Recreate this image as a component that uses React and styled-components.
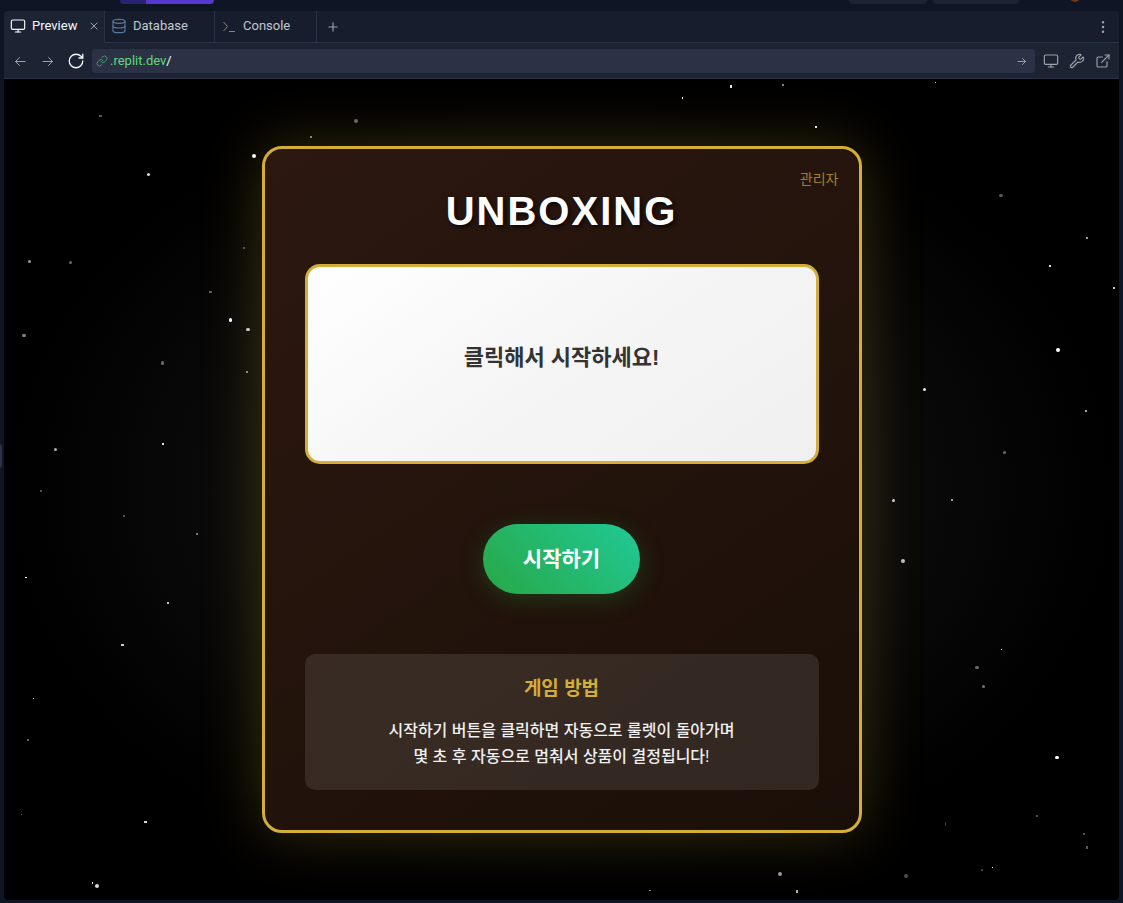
import React, { useState } from "react";
import styled, { createGlobalStyle } from "styled-components";
import {
  Database,
  EllipsisVertical,
  ExternalLink,
  Link,
  Monitor,
  Plus,
  RotateCw,
  Wrench,
  X,
} from "lucide-react";

const GlobalStyle = createGlobalStyle`
  * {
    box-sizing: border-box;
  }

  body {
    margin: 0;
    background: #0e1525;
  }

  button,
  input {
    font: inherit;
    color: inherit;
    border: none;
    background: none;
    padding: 0;
    margin: 0;
  }

  button {
    cursor: pointer;
  }
`;

const Workspace = styled.div`
  display: flex;
  flex-direction: column;
  min-height: 100vh;
  padding: 0 4px 3px;
  position: relative;
  background: #0e1525;
  color: #f5f9fc;
  font-family: Roboto, "Noto Sans CJK KR", sans-serif;
  font-size: 13px;
`;

const TopBar = styled.header`
  display: flex;
  align-items: flex-start;
  height: 11px;
  padding: 0 100px 0 116px;
`;

const RunPill = styled.div`
  width: 94px;
  height: 4px;
  border-radius: 0 0 4px 4px;
  background: linear-gradient(to right, #2a2275 26px, #5538d0 26px);
`;

const TopPill = styled.div`
  width: ${(props) => props.$width}px;
  height: 4px;
  margin-left: ${(props) => (props.$push ? "auto" : "6px")};
  border-radius: 0 0 4px 4px;
  background: #1c2333;
`;

const Avatar = styled.div`
  position: absolute;
  top: -8px;
  right: 43px;
  width: 10px;
  height: 10px;
  border-radius: 50%;
  background: #78350f;
`;

const SplitHandle = styled.div`
  position: absolute;
  top: 444px;
  left: 0;
  width: 2px;
  height: 24px;
  border-radius: 0 2px 2px 0;
  background: #2b3245;
`;

const Pane = styled.section`
  display: flex;
  flex-direction: column;
  flex: 1;
  overflow: hidden;
  border-radius: 4px;
  background: #1c2333;
`;

const TabBar = styled.div`
  display: flex;
  height: 32px;
  background: #171d2d;
`;

const Tab = styled.div`
  display: flex;
  align-items: center;
  width: ${(props) => props.$width}px;
  padding: 0 4px 2px 6px;
  border-right: 1px solid #2b3245;
  border-bottom: 1px solid ${(props) => (props.$active ? "#1c2333" : "#2b3245")};
  background: ${(props) => (props.$active ? "#1c2333" : "transparent")};
  color: ${(props) => (props.$active ? "#f5f9fc" : "#c2c8cc")};
`;

const TabLabel = styled.button`
  display: flex;
  align-items: center;
  gap: 6px;
  flex: 1;
  height: 100%;
`;

const TabRest = styled.div`
  display: flex;
  align-items: center;
  justify-content: space-between;
  flex: 1;
  padding: 0 8px;
  border-bottom: 1px solid #2b3245;
`;

const IconButton = styled.button`
  display: flex;
  align-items: center;
  justify-content: center;
  width: ${(props) => props.$size || 16}px;
  height: ${(props) => props.$size || 16}px;
  color: ${(props) => (props.$bright ? "#f5f9fc" : "#9da2a6")};

  svg {
    flex: none;
  }
`;

const AddressBar = styled.div`
  display: flex;
  align-items: center;
  height: 36px;
  padding: 0 8px;
  border-bottom: 1px solid #2b3245;
  background: #1c2333;
`;

const NavButtons = styled.div`
  display: flex;
  gap: 12px;
  margin-right: 8px;
`;

const ToolButtons = styled.div`
  display: flex;
  gap: 10px;
  margin-left: 8px;
`;

const UrlBox = styled.label`
  display: flex;
  align-items: center;
  flex: 1;
  height: 24px;
  padding: 0 5px 0 4px;
  border-radius: 4px;
  background: #2b3245;
  color: #3f9a5c;

  svg {
    flex: none;
  }

  input {
    flex: 1;
    min-width: 0;
    outline: none;
    color: #f5f9fc;
  }
`;

const Host = styled.span`
  margin-left: 2px;
  color: #5fd97a;
`;

const Page = styled.main`
  display: grid;
  place-items: center;
  flex: 1;
  padding: 20px;
  position: relative;
  background: radial-gradient(ellipse at center, #1a1a1a 0%, #000000 70%);
  font-family: "Liberation Sans", "Noto Sans CJK KR", sans-serif;
`;

const Sky = styled.svg`
  position: absolute;
  inset: 0;
  width: 100%;
  height: 100%;
`;

const Card = styled.div`
  display: flex;
  flex-direction: column;
  align-items: center;
  width: 100%;
  max-width: 600px;
  padding: 40px;
  position: relative;
  border: 3px solid #d4af37;
  border-radius: 20px;
  background: linear-gradient(145deg, #2c1810, #1a0f08);
  box-shadow: 0 0 60px rgba(212, 175, 55, 0.25);
  text-align: center;
`;

const AdminLink = styled.a`
  position: absolute;
  top: 20px;
  right: 20px;
  color: #d4af37;
  font-size: 14px;
  line-height: 20px;
  text-decoration: none;
  opacity: 0.7;
`;

const Title = styled.h1`
  margin: 0 0 30px;
  font-size: 40px;
  line-height: 45px;
  letter-spacing: 2px;
  color: #ffffff;
  text-shadow: 2px 2px 4px rgba(0, 0, 0, 0.8);
`;

const Display = styled.div`
  display: flex;
  align-items: center;
  justify-content: center;
  width: 100%;
  height: 200px;
  padding-bottom: 12px;
  border: 3px solid #d4af37;
  border-radius: 15px;
  background: linear-gradient(145deg, #ffffff 0%, #f5f5f5 50%, #f0f0f0 100%);
  color: #333333;
  font-size: 22px;
  font-weight: 700;
  line-height: 26px;
`;

const StartButton = styled.button`
  height: 70px;
  margin: 60px 0;
  padding: 0 40px;
  border-radius: 35px;
  background: linear-gradient(45deg, #28a745, #20c997);
  box-shadow: 0 5px 25px rgba(40, 167, 69, 0.25);
  color: #ffffff;
  font-size: 21px;
  font-weight: 700;
  line-height: 26px;
`;

const HowTo = styled.section`
  width: 100%;
  padding: 20px;
  border-radius: 10px;
  background: rgba(255, 255, 255, 0.1);

  h3 {
    margin: 0 0 15px;
    color: #d4af37;
    font-size: 19px;
    line-height: 29px;
  }

  p {
    margin: 0;
    color: #f0f0f0;
    font-size: 16px;
    font-weight: 500;
    line-height: 26px;
  }
`;

// x, y, width, height, opacity
const stars = [
  [95, 36, 3, 2, 0.35],
  [143, 94, 3, 3, 0.85],
  [248, 75, 4, 4, 1],
  [24, 181, 3, 3, 0.6],
  [65, 182, 3, 3, 0.4],
  [239, 168, 2, 2, 0.3],
  [205, 212, 3, 2, 0.35],
  [225, 239, 3, 4, 1],
  [242, 249, 4, 3, 0.8],
  [18, 255, 4, 3, 0.5],
  [157, 282, 3, 4, 0.4],
  [242, 292, 2, 2, 0.5],
  [50, 369, 3, 3, 0.7],
  [158, 364, 2, 2, 0.9],
  [36, 411, 2, 2, 0.3],
  [119, 436, 2, 2, 0.3],
  [192, 454, 2, 2, 0.45],
  [21, 498, 2, 1, 1],
  [163, 523, 2, 2, 0.75],
  [117, 565, 3, 2, 0.8],
  [29, 619, 1, 1, 0.7],
  [23, 660, 2, 2, 0.4],
  [17, 735, 1, 1, 0.4],
  [140, 742, 3, 2, 0.85],
  [88, 803, 1, 2, 1],
  [91, 805, 4, 4, 0.85],
  [350, 40, 4, 4, 0.4],
  [306, 57, 2, 2, 0.5],
  [678, 18, 1, 2, 1],
  [726, 6, 2, 3, 0.9],
  [778, 5, 2, 2, 0.5],
  [811, 47, 2, 2, 0.9],
  [931, 3, 1, 1, 0.8],
  [995, 115, 4, 3, 0.35],
  [1082, 158, 2, 2, 0.6],
  [1045, 186, 2, 2, 0.85],
  [1109, 208, 2, 2, 0.8],
  [1052, 269, 4, 4, 1],
  [919, 309, 3, 3, 0.9],
  [1081, 331, 2, 2, 0.65],
  [999, 372, 3, 3, 0.4],
  [888, 420, 3, 3, 0.8],
  [947, 420, 2, 2, 0.6],
  [897, 480, 4, 4, 0.75],
  [997, 570, 1, 1, 0.7],
  [971, 587, 4, 3, 0.4],
  [978, 606, 3, 3, 0.45],
  [1051, 677, 4, 3, 1],
  [1032, 736, 2, 2, 0.3],
  [941, 744, 1, 2, 0.3],
  [1079, 754, 2, 2, 0.3],
  [1082, 767, 2, 3, 0.35],
  [977, 790, 2, 2, 0.25],
  [988, 788, 1, 1, 1],
  [900, 795, 4, 4, 0.3],
  [774, 793, 4, 4, 0.6],
  [792, 811, 2, 3, 0.7],
  [645, 811, 2, 1, 0.5],
];

const ConsoleIcon = () => (
  <svg
    width="16"
    height="16"
    viewBox="0 0 16 16"
    fill="none"
    stroke="#9c8456"
    aria-hidden="true"
  >
    <path d="M2.500 4l4 4.500-4 4.500M8 13.500h6" />
  </svg>
);

const arrows = {
  back: "M13 8.500H3.500M7.500 4.500l-4 4 4 4",
  forward: "M3 8.500h9.500M8.500 4.500l4 4-4 4",
  go: "M4 8.500h7.500M8.500 5.500l3 3-3 3",
};

const ArrowIcon = ({ kind }) => (
  <svg
    width="16"
    height="16"
    viewBox="0 0 16 16"
    fill="none"
    stroke="#9da2a6"
    strokeLinecap="round"
    strokeLinejoin="round"
    aria-hidden="true"
  >
    <path d={arrows[kind]} />
  </svg>
);

const App = () => {
  const [path, setPath] = useState("/");

  return (
    <Workspace>
      <GlobalStyle />
      <TopBar>
        <RunPill />
        <TopPill $width={78} $push />
        <TopPill $width={86} />
        <Avatar />
      </TopBar>
      <SplitHandle />
      <Pane>
        <TabBar>
          <Tab $width={101} $active>
            <TabLabel>
              <Monitor size={16} strokeWidth={1.75} />
              Preview
            </TabLabel>
            <IconButton $size={12} aria-label="Close tab">
              <X size={12} strokeWidth={2} />
            </IconButton>
          </Tab>
          <Tab $width={110}>
            <TabLabel>
              <Database size={16} strokeWidth={1.75} color="#56789c" />
              Database
            </TabLabel>
          </Tab>
          <Tab $width={102}>
            <TabLabel>
              <ConsoleIcon />
              Console
            </TabLabel>
          </Tab>
          <TabRest>
            <IconButton aria-label="New tab">
              <Plus size={14} strokeWidth={2} />
            </IconButton>
            <IconButton aria-label="Pane menu">
              <EllipsisVertical size={16} strokeWidth={1.75} />
            </IconButton>
          </TabRest>
        </TabBar>
        <AddressBar>
          <NavButtons>
            <IconButton aria-label="Back">
              <ArrowIcon kind="back" />
            </IconButton>
            <IconButton aria-label="Forward">
              <ArrowIcon kind="forward" />
            </IconButton>
            <IconButton $bright aria-label="Reload">
              <RotateCw size={18} strokeWidth={1.75} />
            </IconButton>
          </NavButtons>
          <UrlBox>
            <Link size={12} strokeWidth={2} />
            <Host>.replit.dev</Host>
            <input
              type="text"
              aria-label="Path"
              value={path}
              onChange={(e) => setPath(e.target.value)}
            />
            <ArrowIcon kind="go" />
          </UrlBox>
          <ToolButtons>
            <IconButton aria-label="Screen size">
              <Monitor size={16} strokeWidth={1.75} />
            </IconButton>
            <IconButton aria-label="Dev tools">
              <Wrench size={16} strokeWidth={1.75} />
            </IconButton>
            <IconButton aria-label="Open in new window">
              <ExternalLink size={16} strokeWidth={1.75} />
            </IconButton>
          </ToolButtons>
        </AddressBar>
        <Page>
          <Sky
            viewBox="0 0 1115 821"
            preserveAspectRatio="xMidYMid slice"
            aria-hidden="true"
          >
            {stars.map(([x, y, w, h, opacity]) => (
              <rect
                key={`${x}-${y}`}
                x={x}
                y={y}
                width={w}
                height={h}
                rx={w > 2 && h > 2 ? Math.min(w, h) / 2 : 0}
                fill="#ffffff"
                opacity={opacity}
              />
            ))}
          </Sky>
          <Card>
            <AdminLink href="#admin">관리자</AdminLink>
            <Title>UNBOXING</Title>
            <Display>클릭해서 시작하세요!</Display>
            <StartButton>시작하기</StartButton>
            <HowTo>
              <h3>게임 방법</h3>
              <p>
                시작하기 버튼을 클릭하면 자동으로 룰렛이 돌아가며
                <br />몇 초 후 자동으로 멈춰서 상품이 결정됩니다!
              </p>
            </HowTo>
          </Card>
        </Page>
      </Pane>
    </Workspace>
  );
};

export default App;
